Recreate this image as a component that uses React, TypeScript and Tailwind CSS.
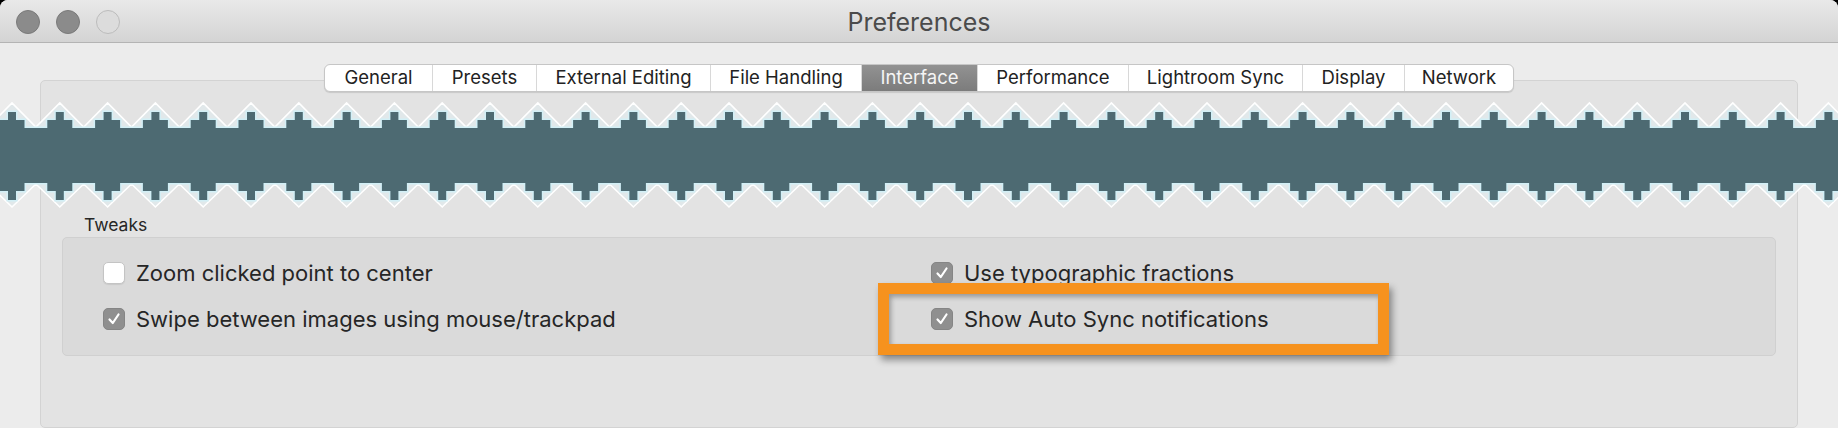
import React from 'react';

const tabs = [
  { label: 'General', w: 'w-[107px]' },
  { label: 'Presets', w: 'w-[104px]' },
  { label: 'External Editing', w: 'w-[174px]' },
  { label: 'File Handling', w: 'w-[151px]' },
  { label: 'Interface', w: 'w-[116px]', active: true },
  { label: 'Performance', w: 'w-[151px]' },
  { label: 'Lightroom Sync', w: 'w-[174px]' },
  { label: 'Display', w: 'w-[102px]' },
  { label: 'Network', w: 'w-[109px]' },
];

const font = "font-['Inter','Liberation_Sans',sans-serif]";

// torn-edge marker drawn across the screenshot
const CutBand = () => {
  const tips: number[] = [];
  for (let k = -1; k < 40; k++) tips.push(12 + 47.8 * k);

  let top = '';
  let bottom = '';
  tips.forEach((x) => {
    top += `${x - 23.9},27 ${x},3 `;
    bottom = `${x},107 ${x - 23.9},84 ` + bottom;
  });
  const last = tips[tips.length - 1] + 23.9;
  const light = `${top}${last},27 ${last},84 ${bottom}`;

  const rects = (
    <>
      <rect x={-20} y={28} width={1880} height={55} />
      {tips.map((x) => (
        <g key={x}>
          <rect x={x - 12.5} y={20} width={25} height={9} />
          <rect x={x - 4} y={12} width={8} height={9} />
          <rect x={x - 12.5} y={82} width={25} height={9} />
          <rect x={x - 4} y={90} width={8} height={10} />
        </g>
      ))}
    </>
  );

  return (
    <svg className="absolute left-0 top-[100px]" width={1838} height={110} viewBox="0 0 1838 110">
      <polygon points={light} fill="#e1e8ea" stroke="#ffffff" strokeWidth={1.6} />
      <g fill="#d2eff6" stroke="#d2eff6" strokeWidth={3}>
        {rects}
      </g>
      <g fill="#4d6a72">{rects}</g>
    </svg>
  );
};

const Check = ({ checked }: { checked?: boolean }) =>
  checked ? (
    <span className="flex h-[22px] w-[22px] shrink-0 items-center justify-center rounded-[5px] bg-[#8f8f8f] border border-[#858585]">
      <svg width="14" height="14" viewBox="0 0 14 14">
        <path d="M2.5 7.5 L5.8 11 L11.5 2.5" fill="none" stroke="#fff" strokeWidth="2.2" strokeLinecap="round" strokeLinejoin="round" />
      </svg>
    </span>
  ) : (
    <span className="h-[22px] w-[22px] shrink-0 rounded-[5px] bg-white border border-[#c4c4c4] shadow-[0_1px_1px_rgba(0,0,0,0.08)]" />
  );

const Option = ({ label, checked }: { label: string; checked?: boolean }) => (
  <div className="flex h-[24px] items-center gap-[11px]">
    <Check checked={checked} />
    <span className="text-[22px] text-[#262626] leading-none">{label}</span>
  </div>
);

const App = () => {
  return (
    <div className={`relative w-[1838px] h-[428px] overflow-hidden bg-black ${font}`}>
      <div className="flex h-full flex-col rounded-t-[8px] bg-[#ececec]">
        {/* title bar */}
        <div className="relative flex h-[43px] shrink-0 items-center justify-center rounded-t-[8px] border-b border-[#b4b4b4] bg-gradient-to-b from-[#e9e9e9] to-[#d4d4d4]">
          <div className="absolute left-[16px] top-[10px] flex gap-[16px]">
            <span className="h-[24px] w-[24px] rounded-full bg-[#8b8b8b] border border-[#7a7a7a]" />
            <span className="h-[24px] w-[24px] rounded-full bg-[#8b8b8b] border border-[#7a7a7a]" />
            <span className="h-[24px] w-[24px] rounded-full bg-[#dcdcdc] border border-[#bcbcbc]" />
          </div>
          <span className="pt-[3px] text-[25px] text-[#4b4b4b]">Preferences</span>
        </div>

        {/* tab panel */}
        <div className="mx-[40px] mt-[37px] flex-1 rounded-[5px] border border-[#d3d3d3] bg-[#e3e3e3]">
          <div className="-mt-[17px] flex justify-center">
            <div className="flex h-[28px] overflow-hidden rounded-[6px] border border-[#c6c6c6] bg-white shadow-[0_1px_1px_rgba(0,0,0,0.12)]">
              {tabs.map((t, i) => (
                <div
                  key={t.label}
                  className={`${t.w} flex items-center justify-center text-[18.5px] ${
                    i > 0 ? 'border-l border-[#d8d8d8]' : ''
                  } ${t.active ? 'bg-gradient-to-b from-[#929292] to-[#7c7c7c] text-[#f5f5f5]' : 'text-[#222]'}`}
                >
                  {t.label}
                </div>
              ))}
            </div>
          </div>

          {/* content hidden under the cut */}
          <div className="h-[123px]" />

          <div className="ml-[43px] text-[17.5px] leading-[20px] text-[#262626]">Tweaks</div>

          <div className="relative mx-[21px] mt-[2px] h-[119px] rounded-[5px] border border-[#d0d0d0] bg-[#dadada]">
            <div className="grid grid-cols-[828px_1fr] gap-y-[22px] pl-[40px] pt-[23px]">
              <Option label="Zoom clicked point to center" />
              <Option label="Use typographic fractions" checked />
              <Option label="Swipe between images using mouse/trackpad" checked />
              <Option label="Show Auto Sync notifications" checked />
            </div>
            <div className="absolute left-[815px] top-[45px] h-[72px] w-[511px] border-[11px] border-[#f6921e] shadow-[3px_5px_7px_rgba(0,0,0,0.4),inset_2px_3px_5px_rgba(0,0,0,0.3)]" />
          </div>
        </div>
      </div>

      <CutBand />
    </div>
  );
};

export default App;
